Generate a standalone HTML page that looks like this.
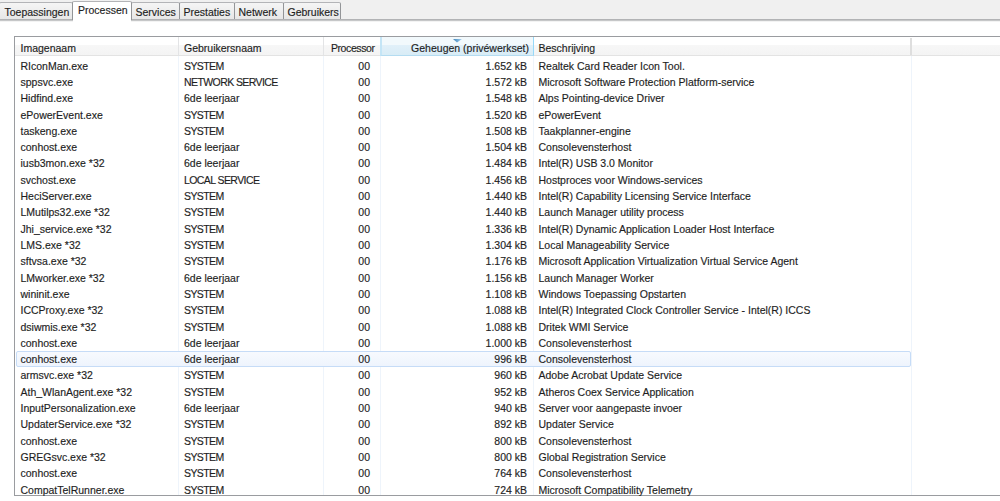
<!DOCTYPE html>
<html><head><meta charset="utf-8">
<style>
html,body{margin:0;padding:0;}
body{width:1000px;height:501px;position:relative;overflow:hidden;background:#fff;font-family:"Liberation Sans",sans-serif;font-size:10.5px;color:#1e1e1e;-webkit-text-stroke:0.15px #1e1e1e;}
.topbar{position:absolute;left:0;top:0;width:1000px;height:20px;background:#f0f0f0;}
.tabline{position:absolute;left:0;top:19px;width:1000px;height:3px;background:linear-gradient(#b2b3b5 0,#b2b3b5 1px,#c6c7c8 1px,#c6c7c8 2px,#f3f3f3 2px);}
.tab{position:absolute;top:2px;height:17px;box-sizing:border-box;border:1px solid #939598;border-top-color:#b3b4b7;border-bottom:none;border-radius:2px 2px 0 0;background:linear-gradient(#f5f5f5,#e7e7e7);line-height:17px;padding-left:3.5px;padding-top:1px;white-space:nowrap;}
.tab.sel{top:1px;height:19px;border-bottom:none;background:#fff;line-height:15px;padding-top:1px;z-index:2;}
.list{position:absolute;left:14px;top:36px;width:1000px;height:460px;box-sizing:border-box;border:1px solid #9a9ca0;border-right:none;background:#fff;}
.hdr{position:absolute;left:15px;top:37px;width:985px;height:19px;background:linear-gradient(#ffffff 0,#ffffff 8px,#f7f7f7 8px,#f4f4f4 18px,#e3e3e3 18px);}
.h{position:absolute;top:39px;height:19px;line-height:19px;white-space:nowrap;box-sizing:border-box;}
.hs{position:absolute;top:37px;width:1px;height:18px;background:#e3e4e6;}
.hsort{position:absolute;left:380px;top:37px;width:154px;height:19px;box-sizing:border-box;background:linear-gradient(#f2f9fc 0,#f2f9fc 8px,#e1f0f9 8px,#d8ecf6 18px);border-right:1px solid #96d9f9;border-left:2px solid #c4e5f6;border-bottom:1px solid #b4dcf1;}
.arrow{position:absolute;left:453px;top:39px;width:0;height:0;border-left:4.5px solid transparent;border-right:4.5px solid transparent;border-top:3px solid #5f9fd2;}
.vl{position:absolute;top:56px;width:1px;height:439px;background:#eef4fb;}
.r{position:absolute;left:15px;width:985px;height:16.31px;line-height:16.31px;white-space:nowrap;}
.r span{position:absolute;top:0;}
.c1{left:5.5px;}
.c2{left:169px;}
.up{letter-spacing:-0.58px;}
.c3{right:630px;}
.c4{right:473px;}
.c5{left:523.5px;}
.hl::before{content:"";position:absolute;left:1px;top:-0.5px;width:895px;height:16px;box-sizing:border-box;border:1px solid #c6dcf7;border-radius:2px;background:linear-gradient(#f7fafe,#eef4fd);}
</style></head><body>
<div class="topbar"></div>
<div class="tabline"></div>
<div class="tab" style="left:-1px;width:74px;padding-left:4.5px;">Toepassingen</div>
<div class="tab sel" style="left:72px;width:60px;padding-left:5px;">Processen</div>
<div style="position:absolute;left:73px;top:19px;width:58px;height:3px;background:#fff;z-index:3"></div>
<div class="tab" style="left:131px;width:49px;">Services</div>
<div class="tab" style="left:179px;width:56px;">Prestaties</div>
<div class="tab" style="left:234px;width:50px;">Netwerk</div>
<div class="tab" style="left:283px;width:58px;">Gebruikers</div>
<div class="list"></div>
<div class="hdr"></div>
<div class="hsort"></div>
<svg style="position:absolute;left:453px;top:39px" width="9" height="4" viewBox="0 0 9 4"><defs><linearGradient id="ag" x1="0" y1="0" x2="1" y2="0"><stop offset="0" stop-color="#4a86b5"/><stop offset="0.5" stop-color="#6eaad6"/><stop offset="1" stop-color="#a8d2ee"/></linearGradient></defs><polygon points="0,0 9,0 4,3.5" fill="url(#ag)"/></svg>
<div class="hs" style="left:178px"></div>
<div class="hs" style="left:323px"></div>
<div class="hs" style="left:910px;top:38px;height:17px;width:2px;background:#dedede"></div>
<div class="h" style="left:20.5px">Imagenaam</div>
<div class="h" style="left:184px">Gebruikersnaam</div>
<div class="h" style="left:323px;width:51.6px;text-align:right;letter-spacing:-0.4px">Processor</div>
<div class="h" style="left:380px;width:149px;text-align:right">Geheugen (privéwerkset)</div>
<div class="h" style="left:538.5px">Beschrijving</div>
<div class="vl" style="left:178px"></div>
<div class="vl" style="left:323px"></div>
<div class="vl" style="left:380px"></div>
<div class="vl" style="left:533px"></div>
<div class="vl" style="left:911px"></div>
<div class="r" style="top:57.60px"><span class="c1">RIconMan.exe</span><span class="c2 up">SYSTEM</span><span class="c3">00</span><span class="c4">1.652 kB</span><span class="c5">Realtek Card Reader Icon Tool.</span></div>
<div class="r" style="top:73.91px"><span class="c1">sppsvc.exe</span><span class="c2 up">NETWORK SERVICE</span><span class="c3">00</span><span class="c4">1.572 kB</span><span class="c5">Microsoft Software Protection Platform-service</span></div>
<div class="r" style="top:90.22px"><span class="c1">Hidfind.exe</span><span class="c2">6de leerjaar</span><span class="c3">00</span><span class="c4">1.548 kB</span><span class="c5">Alps Pointing-device Driver</span></div>
<div class="r" style="top:106.53px"><span class="c1">ePowerEvent.exe</span><span class="c2 up">SYSTEM</span><span class="c3">00</span><span class="c4">1.520 kB</span><span class="c5">ePowerEvent</span></div>
<div class="r" style="top:122.84px"><span class="c1">taskeng.exe</span><span class="c2 up">SYSTEM</span><span class="c3">00</span><span class="c4">1.508 kB</span><span class="c5">Taakplanner-engine</span></div>
<div class="r" style="top:139.15px"><span class="c1">conhost.exe</span><span class="c2">6de leerjaar</span><span class="c3">00</span><span class="c4">1.504 kB</span><span class="c5">Consolevensterhost</span></div>
<div class="r" style="top:155.46px"><span class="c1">iusb3mon.exe *32</span><span class="c2">6de leerjaar</span><span class="c3">00</span><span class="c4">1.484 kB</span><span class="c5">Intel(R) USB 3.0 Monitor</span></div>
<div class="r" style="top:171.77px"><span class="c1">svchost.exe</span><span class="c2 up">LOCAL SERVICE</span><span class="c3">00</span><span class="c4">1.456 kB</span><span class="c5">Hostproces voor Windows-services</span></div>
<div class="r" style="top:188.08px"><span class="c1">HeciServer.exe</span><span class="c2 up">SYSTEM</span><span class="c3">00</span><span class="c4">1.440 kB</span><span class="c5">Intel(R) Capability Licensing Service Interface</span></div>
<div class="r" style="top:204.39px"><span class="c1">LMutilps32.exe *32</span><span class="c2 up">SYSTEM</span><span class="c3">00</span><span class="c4">1.440 kB</span><span class="c5">Launch Manager utility process</span></div>
<div class="r" style="top:220.70px"><span class="c1">Jhi_service.exe *32</span><span class="c2 up">SYSTEM</span><span class="c3">00</span><span class="c4">1.336 kB</span><span class="c5">Intel(R) Dynamic Application Loader Host Interface</span></div>
<div class="r" style="top:237.01px"><span class="c1">LMS.exe *32</span><span class="c2 up">SYSTEM</span><span class="c3">00</span><span class="c4">1.304 kB</span><span class="c5">Local Manageability Service</span></div>
<div class="r" style="top:253.32px"><span class="c1">sftvsa.exe *32</span><span class="c2 up">SYSTEM</span><span class="c3">00</span><span class="c4">1.176 kB</span><span class="c5">Microsoft Application Virtualization Virtual Service Agent</span></div>
<div class="r" style="top:269.63px"><span class="c1">LMworker.exe *32</span><span class="c2">6de leerjaar</span><span class="c3">00</span><span class="c4">1.156 kB</span><span class="c5">Launch Manager Worker</span></div>
<div class="r" style="top:285.94px"><span class="c1">wininit.exe</span><span class="c2 up">SYSTEM</span><span class="c3">00</span><span class="c4">1.108 kB</span><span class="c5">Windows Toepassing Opstarten</span></div>
<div class="r" style="top:302.25px"><span class="c1">ICCProxy.exe *32</span><span class="c2 up">SYSTEM</span><span class="c3">00</span><span class="c4">1.088 kB</span><span class="c5">Intel(R) Integrated Clock Controller Service - Intel(R) ICCS</span></div>
<div class="r" style="top:318.56px"><span class="c1">dsiwmis.exe *32</span><span class="c2 up">SYSTEM</span><span class="c3">00</span><span class="c4">1.088 kB</span><span class="c5">Dritek WMI Service</span></div>
<div class="r" style="top:334.87px"><span class="c1">conhost.exe</span><span class="c2">6de leerjaar</span><span class="c3">00</span><span class="c4">1.000 kB</span><span class="c5">Consolevensterhost</span></div>
<div class="r hl" style="top:351.18px"><span class="c1">conhost.exe</span><span class="c2">6de leerjaar</span><span class="c3">00</span><span class="c4">996 kB</span><span class="c5">Consolevensterhost</span></div>
<div class="r" style="top:367.49px"><span class="c1">armsvc.exe *32</span><span class="c2 up">SYSTEM</span><span class="c3">00</span><span class="c4">960 kB</span><span class="c5">Adobe Acrobat Update Service</span></div>
<div class="r" style="top:383.80px"><span class="c1">Ath_WlanAgent.exe *32</span><span class="c2 up">SYSTEM</span><span class="c3">00</span><span class="c4">952 kB</span><span class="c5">Atheros Coex Service Application</span></div>
<div class="r" style="top:400.11px"><span class="c1">InputPersonalization.exe</span><span class="c2">6de leerjaar</span><span class="c3">00</span><span class="c4">940 kB</span><span class="c5">Server voor aangepaste invoer</span></div>
<div class="r" style="top:416.42px"><span class="c1">UpdaterService.exe *32</span><span class="c2 up">SYSTEM</span><span class="c3">00</span><span class="c4">892 kB</span><span class="c5">Updater Service</span></div>
<div class="r" style="top:432.73px"><span class="c1">conhost.exe</span><span class="c2 up">SYSTEM</span><span class="c3">00</span><span class="c4">800 kB</span><span class="c5">Consolevensterhost</span></div>
<div class="r" style="top:449.04px"><span class="c1">GREGsvc.exe *32</span><span class="c2 up">SYSTEM</span><span class="c3">00</span><span class="c4">800 kB</span><span class="c5">Global Registration Service</span></div>
<div class="r" style="top:465.35px"><span class="c1">conhost.exe</span><span class="c2 up">SYSTEM</span><span class="c3">00</span><span class="c4">764 kB</span><span class="c5">Consolevensterhost</span></div>
<div class="r" style="top:481.66px"><span class="c1">CompatTelRunner.exe</span><span class="c2 up">SYSTEM</span><span class="c3">00</span><span class="c4">724 kB</span><span class="c5">Microsoft Compatibility Telemetry</span></div>
</body></html>
